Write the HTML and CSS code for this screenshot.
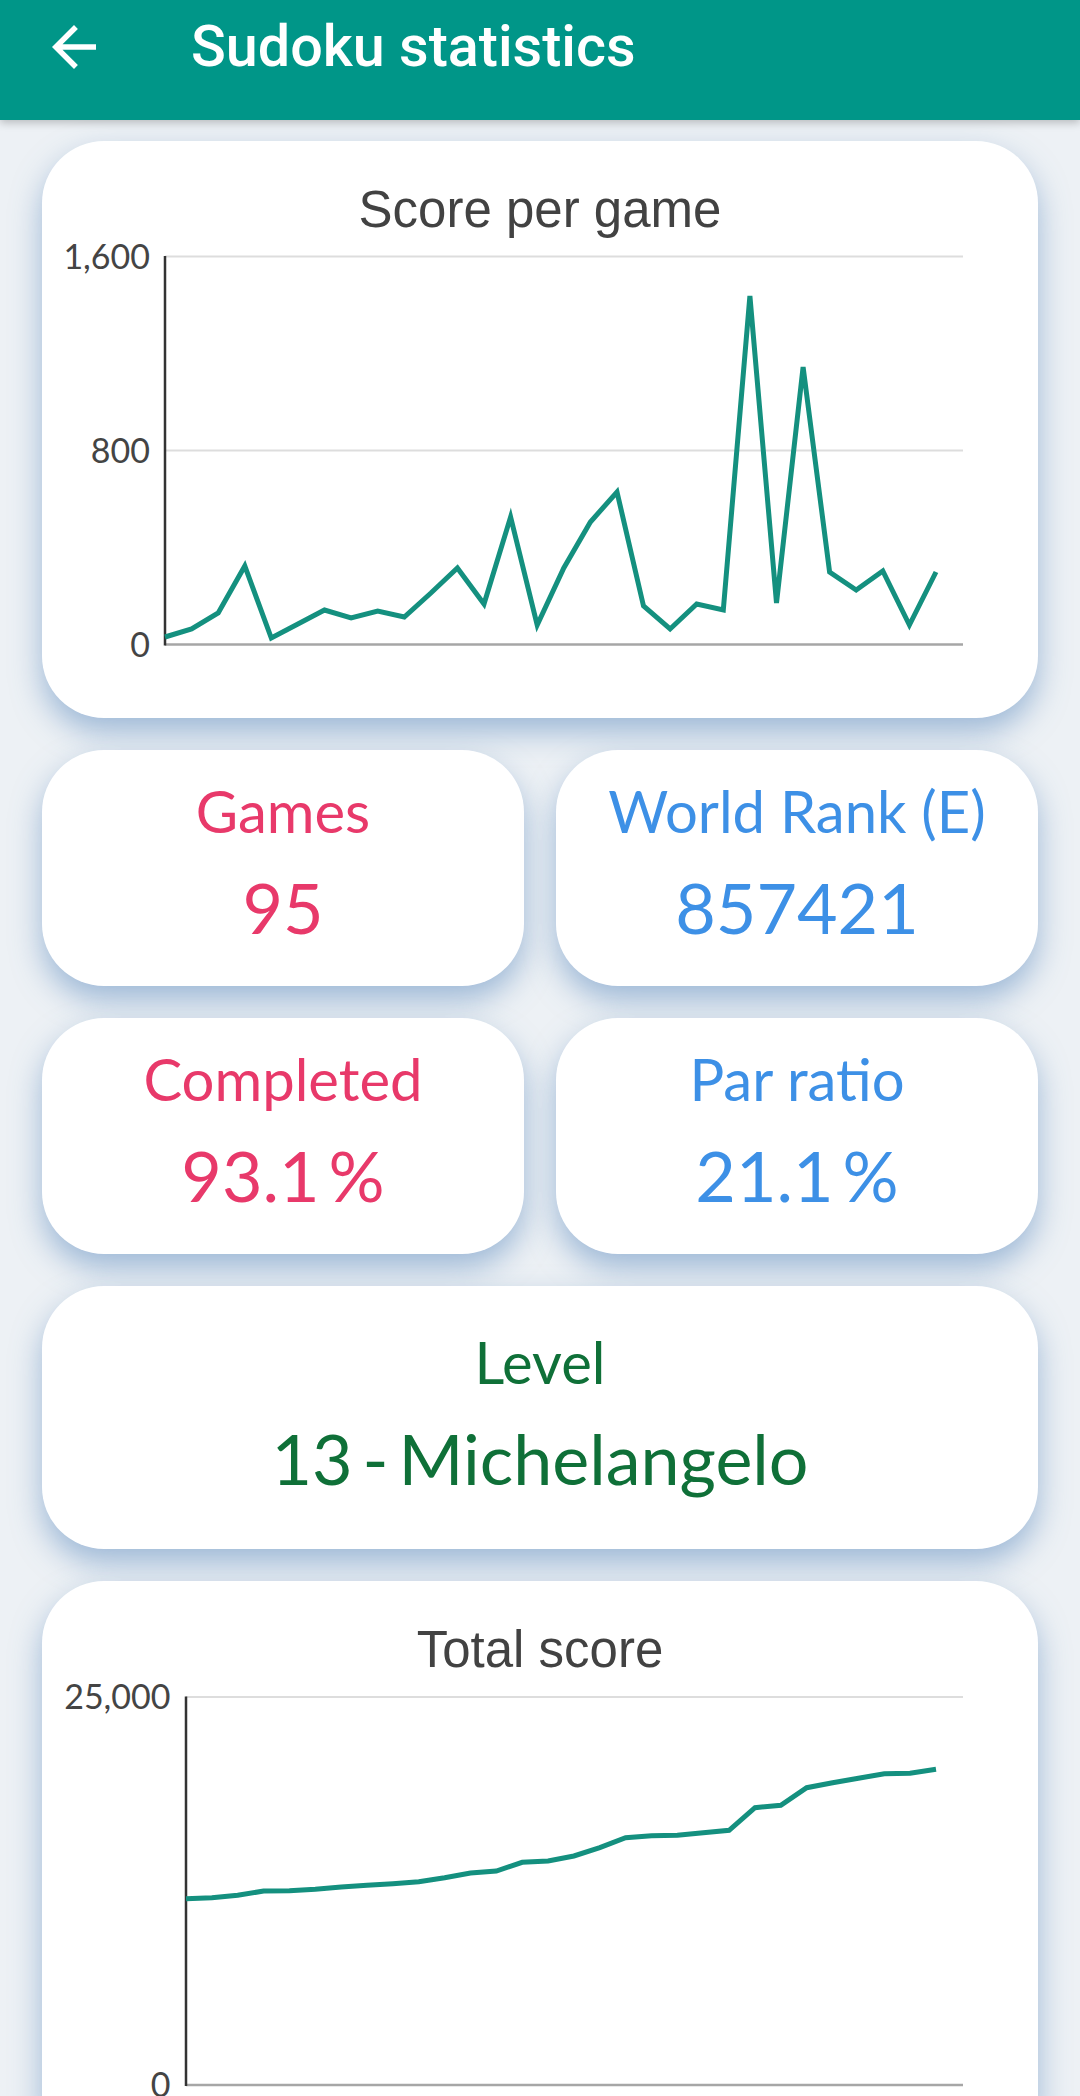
FILE: index.html
```html
<!DOCTYPE html>
<html lang="en">
<head>
<meta charset="utf-8">
<title>Sudoku statistics</title>
<link rel="stylesheet" href="styles.css">
</head>
<body>
<header class="appbar">
  <svg class="back" viewBox="0 0 24 24" aria-hidden="true"><path d="M20 11H7.83l5.59-5.59L12 4l-8 8 8 8 1.41-1.41L7.83 13H20v-2z"/></svg>
  <h1 class="appbar-title">Sudoku statistics</h1>
</header>
<main class="content">
  <section class="card chart-card">
    <h2 class="chart-title">Score per game</h2>
    <svg class="chart" viewBox="0 0 996 478">
      <line class="grid" x1="123" y1="16.5" x2="921" y2="16.5"/>
      <line class="grid" x1="123" y1="210.5" x2="921" y2="210.5"/>
      <line class="base" x1="123" y1="404.5" x2="921" y2="404.5"/>
      <line class="axis" x1="123" y1="16" x2="123" y2="405.5"/>
      <text class="tick" x="108" y="28.5">1,600</text>
      <text class="tick" x="108" y="222.5">800</text>
      <text class="tick" x="108" y="416.5">0</text>
      <polyline class="series" points="123,397 149.6,389 176.2,373 202.8,326 229.3,398 255.9,384 282.5,370 309.1,378 335.7,371 362.3,377 388.9,353 415.4,328 442,364 468.6,277 495.2,385 521.8,328 548.4,282 575,252 601.5,366 628.1,389 654.7,364 681.3,370 707.9,56 734.5,363 761.1,127 787.6,332 814.2,350 840.8,331 867.4,385 894,332"/>
    </svg>
  </section>

  <div class="stat-grid">
    <section class="card stat pink">
      <div class="stat-label">Games</div>
      <div class="stat-value">95</div>
    </section>
    <section class="card stat blue">
      <div class="stat-label">World Rank (E)</div>
      <div class="stat-value">857421</div>
    </section>
    <section class="card stat pink">
      <div class="stat-label">Completed</div>
      <div class="stat-value">93.1 %</div>
    </section>
    <section class="card stat blue">
      <div class="stat-label">Par ratio</div>
      <div class="stat-value">21.1 %</div>
    </section>
  </div>

  <section class="card level">
    <div class="level-label">Level</div>
    <div class="level-value">13 - Michelangelo</div>
  </section>

  <section class="card chart-card">
    <h2 class="chart-title">Total score</h2>
    <svg class="chart" viewBox="0 0 996 478">
      <line class="grid" x1="144" y1="17" x2="921" y2="17"/>
      <line class="base" x1="144" y1="405" x2="921" y2="405"/>
      <line class="axis" x1="144" y1="16.5" x2="144" y2="406"/>
      <text class="tick" x="128.5" y="29">25,000</text>
      <text class="tick" x="128.5" y="417">0</text>
      <polyline class="series" points="144,218.7 169.9,217.7 195.7,215.3 221.6,211 247.4,210.7 273.3,209.3 299.2,207 325,205.3 350.9,203.7 376.8,201.7 402.6,197.7 428.5,193 454.3,191 480.2,182.3 506.1,181 531.9,176 557.8,167.7 583.6,157.7 609.5,155.7 635.4,155.3 661.2,152.7 687.1,150.3 713,127.7 738.8,125.3 764.7,107.7 790.6,102.7 816.4,98.3 842.3,93.7 868.1,93.3 894,89.3"/>
    </svg>
  </section>
</main>
</body>
</html>
```

FILE: styles.css
```css
* {
  box-sizing: border-box;
}

html, body {
  margin: 0;
  padding: 0;
}

body {
  background: #edf1f5;
  font-family: "Lato", "Liberation Sans", sans-serif;
}

.appbar {
  position: relative;
  z-index: 2;
  height: 120px;
  background: #009688;
  display: flex;
  align-items: flex-start;
  padding: 14px 0 0 41px;
  box-shadow: 0 3px 8px rgba(0, 0, 0, 0.22);
}

.back {
  width: 66px;
  height: 66px;
  fill: #ffffff;
  flex: none;
}

.appbar-title {
  margin: 0 0 0 84px;
  font-family: "Roboto", "Liberation Sans", sans-serif;
  font-weight: 500;
  font-size: 57.5px;
  line-height: 66px;
  color: #ffffff;
  white-space: nowrap;
}

.content {
  padding: 21px 42px 40px;
  display: flex;
  flex-direction: column;
  gap: 32px;
}

.card {
  background: #ffffff;
  border-radius: 62px;
  box-shadow: 0 14px 30px rgba(80, 130, 185, 0.5);
}

.chart-card {
  padding-top: 39px;
}

.chart-title {
  margin: 0;
  text-align: center;
  font-family: "Liberation Sans", Arial, sans-serif;
  font-weight: 400;
  font-size: 51px;
  line-height: 60px;
  color: #424242;
}

.chart {
  display: block;
  width: 996px;
  height: 478px;
  overflow: visible;
}

.grid {
  stroke: #dddddd;
  stroke-width: 2;
}

.base {
  stroke: #a6a6a6;
  stroke-width: 2.5;
}

.axis {
  stroke: #333333;
  stroke-width: 2.5;
}

.tick {
  font-family: "Lato", sans-serif;
  font-size: 34px;
  fill: #444444;
  text-anchor: end;
}

.series {
  fill: none;
  stroke: #14907f;
  stroke-width: 5;
  stroke-linejoin: miter;
}

.stat-grid {
  display: grid;
  grid-template-columns: 1fr 1fr;
  gap: 32px;
}

.stat {
  padding: 26px 0 37px;
  text-align: center;
}

.stat-label {
  font-size: 58px;
  line-height: 70px;
}

.stat-value {
  margin-top: 19px;
  font-size: 70px;
  line-height: 84px;
  word-spacing: -9px;
}

.pink {
  color: #e8396a;
}

.blue {
  color: #3d90e6;
}

.level {
  padding: 41px 0 49px;
  text-align: center;
  color: #0f7038;
}

.level-label {
  font-size: 58px;
  line-height: 70px;
}

.level-value {
  margin-top: 19px;
  font-size: 70px;
  line-height: 84px;
  word-spacing: -8px;
}
```
